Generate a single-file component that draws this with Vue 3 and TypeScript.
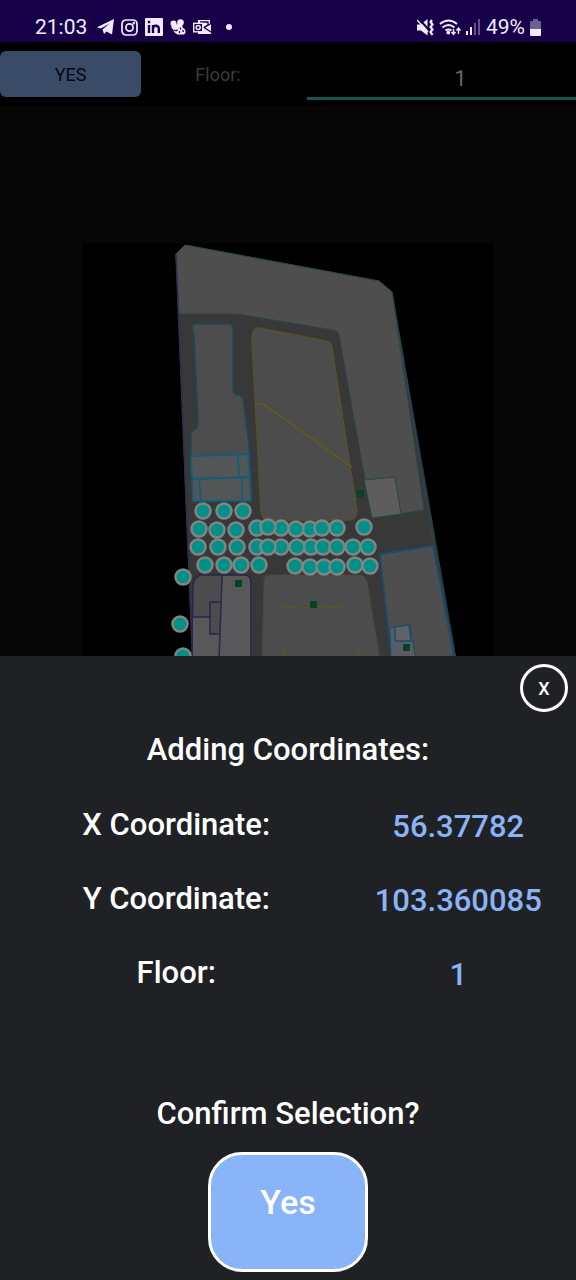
<script setup lang="ts">
import { ref } from 'vue'

interface Entry {
  label: string
  value: string
}

const floor = ref('1')

const entries: Entry[] = [
  { label: 'X Coordinate:', value: '56.37782' },
  { label: 'Y Coordinate:', value: '103.360085' },
  { label: 'Floor:', value: '1' },
]

const points: [number, number][] = [
  [203, 511], [224, 511], [243, 511],
  [199, 529], [217, 530], [236, 530], [257, 528], [281, 528], [268, 527], [310, 529], [296, 529], [337, 528], [322, 528], [364, 527],
  [198, 547], [218, 547], [237, 547], [257, 547], [281, 547], [268, 547], [311, 547], [297, 547], [323, 547], [337, 547], [353, 547], [368, 547],
  [205, 565], [224, 565], [241, 565], [259, 565], [310, 567], [295, 566], [324, 567], [337, 567], [355, 565], [370, 566],
  [183, 577], [180, 624], [183, 656],
]
</script>

<template>
  <div class="screen">
    <header class="status">
      <div class="status-group">
        <span class="clock">21:03</span>
        <svg width="17" height="16" viewBox="0 0 17 16" fill="currentColor"><path d="M0 8.300 17 0 15 15.500 9.500 12.500 7 15 5.500 10.500 12.500 4.500 3.800 9.600Z" /></svg>
        <svg width="17" height="17" viewBox="0 0 17 17" fill="none" stroke="currentColor" stroke-width="1.700"><rect x="1" y="1" width="15" height="15" rx="4" /><circle cx="8.500" cy="8.500" r="3.600" /><circle cx="12.800" cy="4.200" r=".5" /></svg>
        <svg width="18" height="18" viewBox="0 0 18 18"><rect width="18" height="18" rx="1" fill="#f3eaff" /><g fill="none" stroke="#170048" stroke-width="2.400"><path d="M4 7v8M8 15V7M8 15v-4.500q0-2.800 2.800-2.800T13.800 10.500V15" /><path d="M4 2.800v2.400" /></g></svg>
        <svg width="16" height="17" viewBox="0 0 16 17"><g fill="#f3eaff"><circle cx="3.500" cy="4.500" r="3" /><circle cx="10.500" cy="3.500" r="3.300" /><path d="M3 6 8 5l4 1 1 3q3 1 2.500 5l-1.500 1.500H8Q4 14 3.500 11L1 8Z" /></g><path d="m4 11 2.500 1M10.500 8.500v2M7 10.500v1.500M9.500 12v2M12.500 11l1 2" stroke="#170048" stroke-width="1.300" fill="none" /></svg>
        <svg width="18" height="15" viewBox="0 0 18 15"><path d="M5 0h12v4h1v10H5Z" fill="#f3eaff" /><path d="M7 2h8v3l-4 2.500L18 12" fill="none" stroke="#170048" stroke-width="1.300" /><path d="m11 7.500 7-4" stroke="#170048" stroke-width="1.300" /><rect x=".7" y="3.300" width="9" height="8.500" fill="#170048" stroke="#f3eaff" stroke-width="1.400" /><circle cx="5.200" cy="7.500" r="2" fill="none" stroke="#f3eaff" stroke-width="1.500" /></svg>
        <span class="more"></span>
      </div>
      <div class="status-group right">
        <svg width="17" height="17" viewBox="0 0 17 17" fill="none" stroke="currentColor"><path d="M0 5.500h4L10.500 0v16.500L4 11.500H0Z" fill="currentColor" stroke="none" /><path d="m2 0 10 11" stroke="#170048" stroke-width="2" /><path d="m0 1 11 12" stroke-width="1.500" /><path d="m15 1-1.500 2L15.500 5.500 13.500 8l2 2.500-2 2.500 2 3" stroke-width="2.200" /></svg>
        <svg width="22" height="17" viewBox="0 0 22 17" fill="none" stroke="currentColor" stroke-width="1.900"><path d="M1 5q8.500-7 17 0M3.500 8.500q6-5 12 0M6.500 11.500q3-2 6 0" /><circle cx="9.300" cy="13.600" r="1" fill="currentColor" /><path d="M14.500 10v5m-2-2 2 2.500 2-2.500M19.500 15V9.500m-2 2 2-2.500 2 2.500" stroke-width="1.400" /></svg>
        <svg width="15" height="16" viewBox="0 0 15 16" fill="currentColor"><path d="M0 12h2v4H0ZM4 8h2v8H4Z" /><path d="M8 4h2v12H8ZM12 0h2v16h-2Z" opacity=".35" /></svg>
        <span class="battery">49%</span>
        <svg width="11" height="17" viewBox="0 0 11 17" fill="currentColor"><path d="M0 3q0-1 1-1h2V0h5v2h2q1 0 1 1v7H0Z" opacity=".4" /><path d="M0 10h11v6q0 1-1 1H1q-1 0-1-1Z" /></svg>
      </div>
    </header>

    <div class="toolbar">
      <button class="toolbar-yes" type="button">YES</button>
      <label class="toolbar-label" for="floor">Floor:</label>
      <input id="floor" v-model="floor" class="toolbar-floor" type="text" inputmode="numeric" />
    </div>

    <main class="map">
      <svg viewBox="0 106 576 550" preserveAspectRatio="xMidYMin slice" role="img" aria-label="Floor map">
        <rect x="82" y="243" width="412" height="420" fill="#000" />
        <path d="M176 254 185 245 379 281 392 292 458 670H193Z" fill="#383838" stroke="#28394b" />
        <path d="M176 254 185 245 379 281 392 292 424 510 372 518 339 335Q338 331 333 330L238 314H179Z" fill="#4e4e4e" stroke="#29474b" />
        <path d="M176 254 193 670" stroke="#302f4b" stroke-width="1.500" />
        <path d="M196 324h32q5 0 5 5v61q0 6 7 5l3 4 7 56v46h-57l-2-45v-20q0-5 5-7 3-3 2-10l-4-85q-4-10 2-10Z" fill="#4d4d4d" stroke="#1e4a58" stroke-width="1.500" />
        <g fill="#545556" stroke="#125d78" stroke-width="1.800">
          <path d="m191 456 57-2 2 23-58 2ZM192 479l58-2 1 24h-58Z" />
          <path d="m238 454 1 23M199 479l2 22M242 477v24" />
        </g>
        <path d="M259 328 326 341Q331 342 332 348L357 511Q356 521 347 520H269Q262 520 261 510L252 341Q252 327 259 328Z" fill="#4c4c4c" stroke="#57502f" stroke-width="1.500" />
        <path d="M257 403q7 1 15 7 40 29 80 57" fill="none" stroke="#605a1c" stroke-width="1.800" />
        <path d="m364 480 31-3 6 37-29 4Z" fill="#5d5d5d" stroke="#24483b" />
        <path d="m401 514 23-3" stroke="#24483b" />
        <path d="m392 292 42 254" stroke="#29474b" />
        <path d="m380 554 53-8 21 110-62 5Z" fill="#4e4e4e" stroke="#164f70" stroke-width="1.800" />
        <path d="m390 628 20-3 6 36h-25Z" fill="#595d63" stroke="#16506b" />
        <path d="m395 627 14-2 2 16h-16Z" fill="#5f6367" stroke="#16506b" stroke-width="1.500" />
        <path d="M200 575h44q7 0 7 7v80h-59l1-76Q193 578 200 575Z" fill="#4c4c4e" stroke="#2b244b" stroke-width="1.500" />
        <path d="M221 576h24q5 0 5 7v78h-31Z" fill="#58585a" />
        <path d="M193 617h18v17h8v24h-26Z" fill="#58585a" />
        <path d="m222 576-3 85M193 617h18M220 602h-10v32h10" fill="none" stroke="#2b244b" stroke-width="1.500" />
        <path d="M268 575h90q7 0 9 7l14 84H262l2-84q0-6 4-7Z" fill="#4c4c4c" stroke="#4b4b32" />
        <path d="M283 607q30 2 59-1M285 649v8M357 648l2 9" fill="none" stroke="#5b561d" stroke-width="1.500" />
        <g fill="#064224">
          <rect x="235" y="580" width="7" height="7" />
          <rect x="310" y="601" width="7" height="7" />
          <rect x="357" y="490" width="7" height="7" />
          <rect x="403" y="644" width="7" height="7" />
        </g>
        <g fill="#009088" stroke="#808583" stroke-width="2.500">
          <circle v-for="([x, y], i) in points" :key="i" :cx="x" :cy="y" r="7.500" />
        </g>
      </svg>
    </main>

    <section class="sheet" role="dialog" aria-labelledby="sheet-title">
      <button class="close" type="button" aria-label="Close">X</button>
      <h1 id="sheet-title" class="heading">Adding Coordinates:</h1>
      <dl class="entries">
        <div v-for="entry in entries" :key="entry.label" class="entry">
          <dt>{{ entry.label }}</dt>
          <dd>{{ entry.value }}</dd>
        </div>
      </dl>
      <h2 class="heading">Confirm Selection?</h2>
      <button class="confirm" type="button">Yes</button>
    </section>
  </div>
</template>

<style>
body {
  margin: 0;
  background: #060606;
}
</style>

<style scoped>
* {
  box-sizing: border-box;
}

.screen {
  display: flex;
  flex-direction: column;
  height: 100vh;
  font-family: Roboto, "Noto Sans", sans-serif;
  background: #060606;
}

button,
input {
  font-family: inherit;
}

.status {
  display: flex;
  flex: none;
  justify-content: space-between;
  align-items: center;
  height: 42px;
  padding: 12px 35px 0;
  color: #f3eaff;
  background: #170048;
}

.status-group {
  display: flex;
  align-items: center;
  gap: 7px;
}

.right {
  gap: 5px;
}

.clock,
.battery {
  font-size: 21px;
  line-height: 24px;
}

.clock {
  margin-right: 3px;
}

.more {
  width: 6px;
  height: 6px;
  margin-left: 8px;
  border-radius: 50%;
  background: currentColor;
}

.toolbar {
  display: grid;
  flex: none;
  grid-template-columns: 141fr 166fr 269fr;
  align-items: center;
  height: 64px;
  background: #000;
}

.toolbar-yes {
  height: 46px;
  padding: 0;
  border: 0;
  border-radius: 6px;
  font-size: 18px;
  color: #06080c;
  background: #3a4b68;
}

.toolbar-label {
  padding-right: 12px;
  font-size: 18px;
  text-align: center;
  color: #3c3c3c;
}

.toolbar-floor {
  align-self: start;
  width: 100%;
  height: 58px;
  padding: 18px 0 0 38px;
  border: 0;
  border-bottom: 3px solid #13594f;
  border-radius: 0;
  outline: 0;
  font-size: 22px;
  text-align: center;
  color: #666;
  background: transparent;
}

.map {
  flex: 1;
  min-height: 0;
  overflow: hidden;
}

.map svg {
  display: block;
  width: 100%;
  height: 100%;
}

.sheet {
  display: flex;
  flex: none;
  flex-direction: column;
  align-items: center;
  padding: 8px 0;
  color: #fff;
  background: #202125;
}

.close {
  align-self: flex-end;
  width: 48px;
  height: 48px;
  margin-right: 8px;
  padding: 0;
  border: 3px solid #fff;
  border-radius: 50%;
  font-size: 18px;
  font-weight: 500;
  color: #fff;
  background: transparent;
}

.heading {
  margin: 18px 0;
  font-size: 31px;
  font-weight: 500;
  line-height: 40px;
}

.entries {
  width: 100%;
  margin: 0 0 66px;
  padding-right: 12px;
}

.entry {
  display: grid;
  grid-template-columns: 5fr 3fr;
  align-items: center;
  height: 74px;
  font-size: 31px;
  font-weight: 500;
  line-height: 40px;
  text-align: center;
}

.entry dt,
.entry dd {
  margin: 0;
}

.entry dd {
  padding-top: 4px;
  color: #8ab4f8;
}

.confirm {
  width: 160px;
  height: 120px;
  padding: 0 0 20px;
  border: 3px solid #fff;
  border-radius: 34px;
  font-size: 34px;
  font-weight: 500;
  color: #fff;
  background: #8ab4f8;
}
</style>
